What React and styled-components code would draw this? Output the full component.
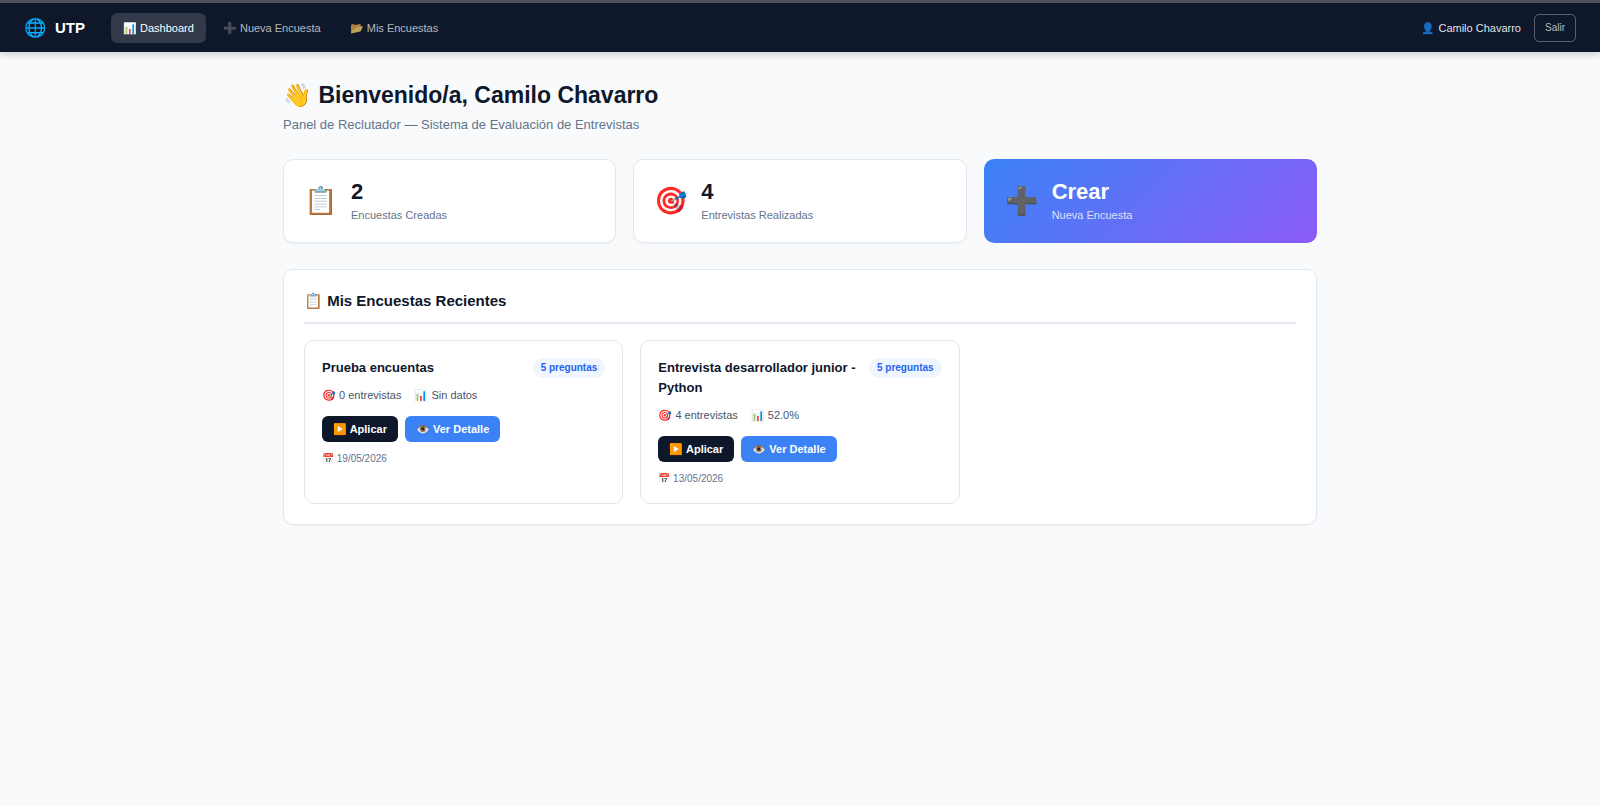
import styled, { createGlobalStyle } from "styled-components";
import React from "react";

const encuestas = [
  {
    titulo: "Prueba encuentas",
    preguntas: 5,
    entrevistas: 0,
    promedio: "Sin datos",
    fecha: "19/05/2026",
  },
  {
    titulo: "Entrevista desarrollador junior - Python",
    preguntas: 5,
    entrevistas: 4,
    promedio: "52.0%",
    fecha: "13/05/2026",
  },
];

export default function App() {
  return (
    <>
      <GlobalStyle />
      <Navbar>
        <Brand href="#">
          <BrandIcon>🌐</BrandIcon>
          <span>UTP</span>
        </Brand>
        <Menu>
          <MenuLink href="#" $active>
            📊 Dashboard
          </MenuLink>
          <MenuLink href="#">➕ Nueva Encuesta</MenuLink>
          <MenuLink href="#">📂 Mis Encuestas</MenuLink>
        </Menu>
        <User>👤 Camilo Chavarro</User>
        <Logout type="button">Salir</Logout>
      </Navbar>
      <Main>
        <Heading>👋 Bienvenido/a, Camilo Chavarro</Heading>
        <Subtitle>Panel de Reclutador — Sistema de Evaluación de Entrevistas</Subtitle>
        <Stats>
          <Stat>
            <StatIcon>📋</StatIcon>
            <div>
              <StatValue>2</StatValue>
              <StatLabel>Encuestas Creadas</StatLabel>
            </div>
          </Stat>
          <Stat>
            <StatIcon>🎯</StatIcon>
            <div>
              <StatValue>4</StatValue>
              <StatLabel>Entrevistas Realizadas</StatLabel>
            </div>
          </Stat>
          <StatAction href="#">
            <StatIcon>➕</StatIcon>
            <div>
              <StatValue>Crear</StatValue>
              <StatLabel $light>Nueva Encuesta</StatLabel>
            </div>
          </StatAction>
        </Stats>
        <Section>
          <SectionTitle>📋 Mis Encuestas Recientes</SectionTitle>
          <Surveys>
            {encuestas.map((e) => (
              <Survey key={e.titulo}>
                <SurveyHeader>
                  <SurveyTitle>{e.titulo}</SurveyTitle>
                  <Badge>{e.preguntas} preguntas</Badge>
                </SurveyHeader>
                <SurveyInfo>
                  <span>🎯 {e.entrevistas} entrevistas</span>
                  <span>📊 {e.promedio}</span>
                </SurveyInfo>
                <Actions>
                  <Action href="#">▶️ Aplicar</Action>
                  <Action href="#" $blue>
                    👁️ Ver Detalle
                  </Action>
                </Actions>
                <SurveyDate>📅 {e.fecha}</SurveyDate>
              </Survey>
            ))}
          </Surveys>
        </Section>
      </Main>
    </>
  );
}

const GlobalStyle = createGlobalStyle`
  * {
    box-sizing: border-box;
    margin: 0;
    padding: 0;
  }
  body {
    background-color: #f8fafc;
    color: #0f172a;
    font-family: "Liberation Sans", Arial, sans-serif;
    font-size: 11px;
    line-height: 18px;
  }
  a {
    text-decoration: none;
  }
`;
const Navbar = styled.nav`
  display: flex;
  align-items: center;
  padding: 10px 24px 9px;
  border-top: 3px solid #4f5358;
  background-color: #0f172a;
  box-shadow: 0 2px 8px rgba(0, 0, 0, 0.2);
`;
const Brand = styled.a`
  display: flex;
  align-items: center;
  gap: 9px;
  margin-right: 26px;
  color: white;
  font-size: 15px;
  font-weight: 700;
`;
const BrandIcon = styled.span`
  font-size: 18px;
  font-weight: 400;
`;
const Menu = styled.div`
  display: flex;
  flex: 1;
  gap: 5px;
`;
const MenuLink = styled.a`
  padding: 6px 12px;
  border-radius: 6px;
  color: ${(p) => (p.$active ? "white" : "rgba(255, 255, 255, 0.7)")};
  background-color: ${(p) => (p.$active ? "rgba(255, 255, 255, 0.15)" : "transparent")};
`;
const User = styled.span`
  margin-right: 13px;
  color: rgba(255, 255, 255, 0.9);
`;
const Logout = styled.button`
  padding: 4px 10px;
  border: 1px solid rgba(255, 255, 255, 0.3);
  border-radius: 5px;
  background-color: transparent;
  color: rgba(255, 255, 255, 0.7);
  font-family: inherit;
  font-size: 10px;
  line-height: 18px;
`;
const Main = styled.main`
  max-width: 1082px;
  margin: 0 auto;
  padding: 25px 24px;
`;
const Heading = styled.h1`
  margin-bottom: 2px;
  font-size: 23px;
  line-height: 36px;
`;
const Subtitle = styled.p`
  margin-bottom: 24px;
  color: #64748b;
  font-size: 13px;
  line-height: 20px;
`;
const Stats = styled.div`
  display: grid;
  grid-template-columns: repeat(3, 1fr);
  gap: 17px;
  margin-bottom: 26px;
`;
const Stat = styled.div`
  display: flex;
  align-items: center;
  gap: 13px;
  padding: 18px 20px;
  border: 1px solid #e2e8f0;
  border-radius: 10px;
  color: #0f172a;
  background-color: white;
  box-shadow: 0 1px 2px rgba(0, 0, 0, 0.05);
`;
const StatAction = styled.a`
  display: flex;
  align-items: center;
  gap: 13px;
  padding: 19px 21px;
  border-radius: 10px;
  color: white;
  background: linear-gradient(135deg, #3b82f6, #8b5cf6);
`;
const StatIcon = styled.span`
  font-size: 27px;
  line-height: 32px;
`;
const StatValue = styled.h2`
  font-size: 22px;
  line-height: 28px;
`;
const StatLabel = styled.p`
  color: ${(p) => (p.$light ? "rgba(255, 255, 255, 0.8)" : "#64748b")};
`;
const Section = styled.section`
  padding: 20px;
  border: 1px solid #e2e8f0;
  border-radius: 10px;
  background-color: white;
  box-shadow: 0 1px 2px rgba(0, 0, 0, 0.05);
`;
const SectionTitle = styled.h2`
  padding-bottom: 10px;
  margin-bottom: 16px;
  border-bottom: 2px solid #e2e8f0;
  font-size: 15px;
  line-height: 22px;
`;
const Surveys = styled.div`
  display: grid;
  grid-template-columns: repeat(3, 1fr);
  gap: 17px;
`;
const Survey = styled.article`
  padding: 17px;
  border: 1px solid #e2e8f0;
  border-radius: 10px;
`;
const SurveyHeader = styled.div`
  display: flex;
  justify-content: space-between;
  align-items: flex-start;
  gap: 8px;
  margin-bottom: 8px;
`;
const SurveyTitle = styled.h3`
  font-size: 13px;
  line-height: 20px;
`;
const Badge = styled.span`
  padding: 2px 8px;
  border-radius: 10px;
  background-color: #eff6ff;
  color: #2563eb;
  font-size: 10px;
  font-weight: 700;
  line-height: 16px;
  white-space: nowrap;
`;
const SurveyInfo = styled.div`
  display: flex;
  gap: 13px;
  margin-bottom: 12px;
  color: #475569;
`;
const Actions = styled.div`
  display: flex;
  gap: 7px;
  margin-bottom: 10px;
`;
const Action = styled.a`
  padding: 4px 11px;
  border-radius: 6px;
  background-color: ${(p) => (p.$blue ? "#3b82f6" : "#0f172a")};
  color: white;
  font-weight: 700;
`;
const SurveyDate = styled.p`
  color: #64748b;
  font-size: 10px;
  line-height: 14px;
`;
